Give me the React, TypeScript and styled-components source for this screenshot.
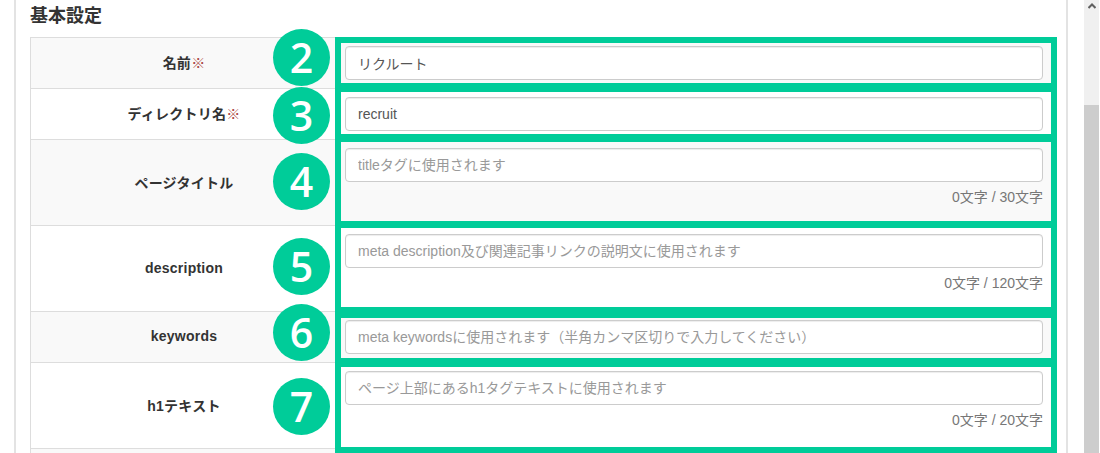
import React from 'react';
import styled, { createGlobalStyle } from 'styled-components';

interface FieldRow {
  label: string;
  required?: boolean;
  value?: string;
  placeholder?: string;
  counter?: string;
  badge: number;
  badgeTop: number;
  boxTop: number;
  boxHeight: number;
}

const rows: FieldRow[] = [
  { label: '名前', required: true, value: 'リクルート', badge: 2, badgeTop: -8, boxTop: 0, boxHeight: 52 },
  { label: 'ディレクトリ名', required: true, value: 'recruit', badge: 3, badgeTop: -1, boxTop: -2, boxHeight: 54 },
  { label: 'ページタイトル', placeholder: 'titleタグに使用されます', counter: '0文字 / 30文字', badge: 4, badgeTop: 14, boxTop: -3, boxHeight: 91 },
  { label: 'description', placeholder: 'meta description及び関連記事リンクの説明文に使用されます', counter: '0文字 / 120文字', badge: 5, badgeTop: 13, boxTop: -3, boxHeight: 91 },
  { label: 'keywords', placeholder: 'meta keywordsに使用されます（半角カンマ区切りで入力してください）', badge: 6, badgeTop: -7, boxTop: 1, boxHeight: 52 },
  { label: 'h1テキスト', placeholder: 'ページ上部にあるh1タグテキストに使用されます', counter: '0文字 / 20文字', badge: 7, badgeTop: 16, boxTop: -1, boxHeight: 92 },
];

const GlobalStyle = createGlobalStyle`
  html, body {
    margin: 0;
    height: 453px;
    overflow: hidden;
    background: #fff;
  }
`;

const Page = styled.div`
  display: flex;
  height: 453px;
  overflow: hidden;
  font-family: 'Liberation Sans', 'Noto Sans CJK JP', sans-serif;
  color: #333;
`;

const Main = styled.main`
  flex: 1;
  min-width: 0;
  padding-left: 14px;
`;

const Panel = styled.section`
  box-sizing: border-box;
  width: 1054px;
  height: 453px;
  padding: 0 14px;
  border-left: 2px solid #e3e3e3;
  border-right: 2px solid #e3e3e3;
`;

const Heading = styled.h3`
  margin: 0 0 4px;
  font-size: 18px;
  font-weight: 700;
  line-height: 33px;
`;

const Table = styled.div`
  border-left: 1px solid #ddd;
  border-right: 1px solid #ddd;
`;

const Row = styled.div<{ $striped: boolean; $height: number }>`
  position: relative;
  box-sizing: border-box;
  display: grid;
  grid-template-columns: 306px 1fr;
  height: ${({ $height }) => $height}px;
  border-top: 1px solid #ddd;
  background: ${({ $striped }) => ($striped ? '#f9f9f9' : '#fff')};
`;

const Label = styled.div`
  display: flex;
  align-items: center;
  justify-content: center;
  padding-bottom: 2px;
  font-size: 14px;
  font-weight: 700;
  letter-spacing: 0.25px;
`;

const Required = styled.span`
  color: #a94442;
`;

const Cell = styled.div`
  padding: 8px;
  min-width: 0;
`;

const TextInput = styled.input`
  display: block;
  box-sizing: border-box;
  width: 100%;
  height: 34px;
  padding: 6px 12px;
  border: 1px solid #ccc;
  border-radius: 4px;
  box-shadow: inset 0 1px 1px rgba(0, 0, 0, 0.075);
  background: #fff;
  color: #555;
  font-family: inherit;
  font-size: 14px;

  &::placeholder {
    color: #999;
    opacity: 1;
  }
`;

const Counter = styled.div`
  margin-top: 5px;
  color: #777;
  font-size: 14px;
  line-height: 20px;
  text-align: right;
`;

const Highlight = styled.div<{ $top: number; $height: number }>`
  position: absolute;
  z-index: 1;
  box-sizing: border-box;
  left: 304px;
  top: ${({ $top }) => $top - 1}px;
  width: 722px;
  height: ${({ $height }) => $height}px;
  border: 6px solid #00cc99;
  pointer-events: none;
`;

const Badge = styled.div<{ $top: number }>`
  position: absolute;
  z-index: 2;
  left: 242px;
  top: ${({ $top }) => $top - 1}px;
  box-sizing: border-box;
  width: 57px;
  height: 57px;
  padding-bottom: 1px;
  display: flex;
  align-items: center;
  justify-content: center;
  border-radius: 50%;
  background: #00cc99;
  color: #fff;
  font-family: 'Open Sans', sans-serif;
  font-size: 41px;
  font-weight: 600;
  line-height: 1;
`;

const Scrollbar = styled.aside`
  flex: none;
  box-sizing: border-box;
  width: 16px;
  display: flex;
  flex-direction: column;
  background: #f0f0f0;
  border-right: 1px solid #fff;
`;

const ScrollButton = styled.div`
  box-sizing: border-box;
  height: 105px;
  display: flex;
  justify-content: center;
  align-items: flex-start;
  padding-top: 3px;
`;

const ScrollThumb = styled.div`
  flex: 1;
  background: #cdcdcd;
`;

export default function App() {
  return (
    <>
      <GlobalStyle />
      <Page>
        <Main>
          <Panel>
            <Heading>基本設定</Heading>
            <Table>
              {rows.map((row, i) => (
                <Row key={row.label} $striped={i % 2 === 0} $height={row.counter ? 86 : 51}>
                  <Label>
                    {row.label}
                    {row.required && <Required>※</Required>}
                  </Label>
                  <Cell>
                    <TextInput readOnly value={row.value} placeholder={row.placeholder} />
                    {row.counter && <Counter>{row.counter}</Counter>}
                  </Cell>
                  <Highlight $top={row.boxTop} $height={row.boxHeight} />
                  <Badge $top={row.badgeTop}>{row.badge}</Badge>
                </Row>
              ))}
              <Row $striped $height={20} />
            </Table>
          </Panel>
        </Main>
        <Scrollbar>
          <ScrollButton>
            <svg width="8" height="6" viewBox="0 0 8 6">
              <path d="M0.5 5 L4 1.5 L7.5 5" fill="none" stroke="#606060" strokeWidth="2" />
            </svg>
          </ScrollButton>
          <ScrollThumb />
        </Scrollbar>
      </Page>
    </>
  );
}
